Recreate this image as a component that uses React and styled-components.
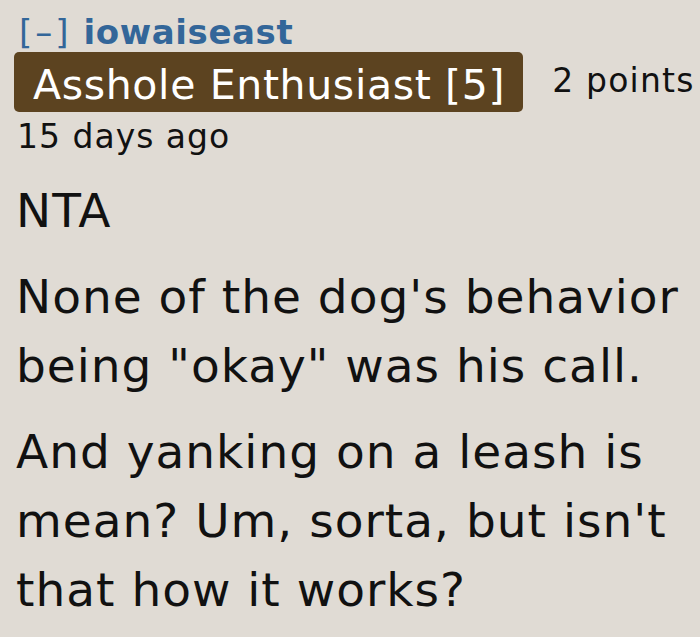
import React from 'react';
import styled, { createGlobalStyle } from 'styled-components';

const Global = createGlobalStyle`
  html, body {
    margin: 0;
    background: #e0dbd4;
  }
  body {
    font-family: "DejaVu Sans", Verdana, sans-serif;
    color: #111;
    overflow: hidden;
  }
`;

const Comment = styled.div`
  padding: 12px 0 0 16px;
  width: 684px;
  height: 625px;
  overflow: hidden;
`;

const Tagline = styled.div`
  font-size: 34px;
  line-height: 40px;
  color: #336699;
  padding-left: 3px;
`;

const Expand = styled.span`
  font-weight: normal;
  letter-spacing: 3px;
  margin-right: 12px;
`;

const Author = styled.span`
  font-weight: bold;
  letter-spacing: 0.6px;
`;

const FlairRow = styled.div`
  display: flex;
  align-items: flex-start;
  gap: 29px;
  margin-left: -2px;
`;

const Flair = styled.span`
  background: #5c4320;
  color: #fff;
  border-radius: 5px;
  padding: 7px 18px 0 19px;
  line-height: 53px;
  font-size: 41px;
  letter-spacing: 0.65px;
`;

const Score = styled.span`
  font-size: 33px;
  line-height: 40px;
  letter-spacing: 1.2px;
  margin-top: 9px;
`;

const Time = styled.div`
  font-size: 33px;
  line-height: 40px;
  letter-spacing: 1px;
  margin-top: 5px;
  padding-left: 1px;
`;

const Body = styled.div`
  margin-top: 19px;
  font-size: 47px;
  letter-spacing: 1px;
`;

const Para = styled.p`
  margin: 0 0 17px;
  line-height: 69px;
`;

export default function App() {
  return (
    <>
      <Global />
      <Comment>
        <Tagline>
          <Expand>[–]</Expand>
          <Author>iowaiseast</Author>
        </Tagline>
        <FlairRow>
          <Flair>Asshole Enthusiast [5]</Flair>
          <Score>2 points</Score>
        </FlairRow>
        <Time>15 days ago</Time>
        <Body>
          <Para>NTA</Para>
          <Para>None of the dog's behavior being "okay" was his call.</Para>
          <Para>And yanking on a leash is mean? Um, sorta, but isn't that how it works?</Para>
        </Body>
      </Comment>
    </>
  );
}
